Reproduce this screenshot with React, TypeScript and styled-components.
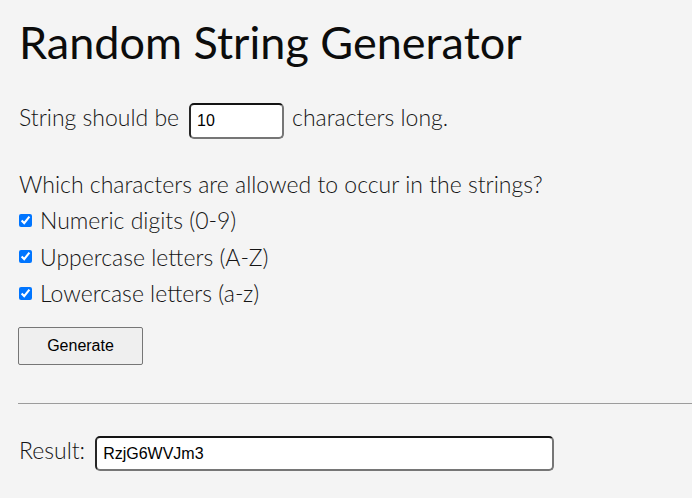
import React, { useState } from "react";
import styled, { createGlobalStyle } from "styled-components";

const GlobalStyle = createGlobalStyle`
  html, body {
    margin: 0;
    padding: 0;
    background: #f4f4f4;
  }
  body {
    font-family: Lato, "Noto Sans", sans-serif;
    color: #151515;
  }
`;

const Page = styled.main`
  padding: 0 0 0 18px;
  overflow: hidden;
`;

const Title = styled.h1`
  margin: 15px 0 0 1px;
  font-family: Lato, "Noto Sans", sans-serif;
  font-size: 45px;
  font-weight: 400;
  line-height: 55px;
  color: #0c0c0c;
`;

const TextLine = styled.p<{ $top: number; $lh: number }>`
  margin: ${(p) => p.$top}px 0 0 1px;
  font-size: 23px;
  font-weight: 300;
  line-height: ${(p) => p.$lh}px;
`;

const Field = styled.input<{ $w: number; $h: number }>`
  box-sizing: border-box;
  width: ${(p) => p.$w}px;
  height: ${(p) => p.$h}px;
  margin: 0 8px 0 10px;
  padding: 0 6px;
  border: 2px solid #767676;
  border-top-color: #141414;
  border-left-color: #262626;
  border-radius: 5px;
  background: #ffffff;
  font-family: "Liberation Sans", Arial, sans-serif;
  font-size: 16px;
  color: #000;
  outline: none;
`;

const OptionList = styled.div`
  display: flex;
  flex-direction: column;
`;

const Option = styled.label`
  display: flex;
  align-items: center;
  height: 36.5px;
  font-size: 23px;
  font-weight: 300;
`;

const Check = styled.input`
  width: 13px;
  height: 13px;
  margin: 0 8px 0 1px;
  accent-color: #0075ff;
`;

const Button = styled.button`
  box-sizing: border-box;
  width: 125px;
  height: 38px;
  margin-top: 15.5px;
  background: #efefef;
  border: 1px solid #767676;
  border-radius: 2px;
  font-family: "Liberation Sans", Arial, sans-serif;
  font-size: 16px;
  color: #000;
  cursor: pointer;
`;

const Rule = styled.hr`
  height: 0;
  margin: 37.5px 0 0;
  border: 0;
  border-top: 1px solid #9c9c9c;
`;

const ResultLine = styled.p`
  margin: 28px 0 0 1px;
  font-size: 23px;
  font-weight: 300;
  line-height: 37px;
`;

const options = [
  "Numeric digits (0-9)",
  "Uppercase letters (A-Z)",
  "Lowercase letters (a-z)",
];

export default function App() {
  const [len, setLen] = useState("10");
  const [result] = useState("RzjG6WVJm3");
  return (
    <>
      <GlobalStyle />
      <Page>
        <Title>Random String Generator</Title>
        <TextLine $top={29} $lh={37}>
          String should be
          <Field
            $w={95}
            $h={36}
            value={len}
            onChange={(e) => setLen(e.target.value)}
          />
          characters long.
        </TextLine>
        <TextLine $top={28} $lh={35}>
          Which characters are allowed to occur in the strings?
        </TextLine>
        <OptionList>
          {options.map((o) => (
            <Option key={o}>
              <Check type="checkbox" defaultChecked />
              {o}
            </Option>
          ))}
        </OptionList>
        <Button>Generate</Button>
        <Rule />
        <ResultLine>
          Result:
          <Field $w={459} $h={35} value={result} readOnly />
        </ResultLine>
      </Page>
    </>
  );
}
